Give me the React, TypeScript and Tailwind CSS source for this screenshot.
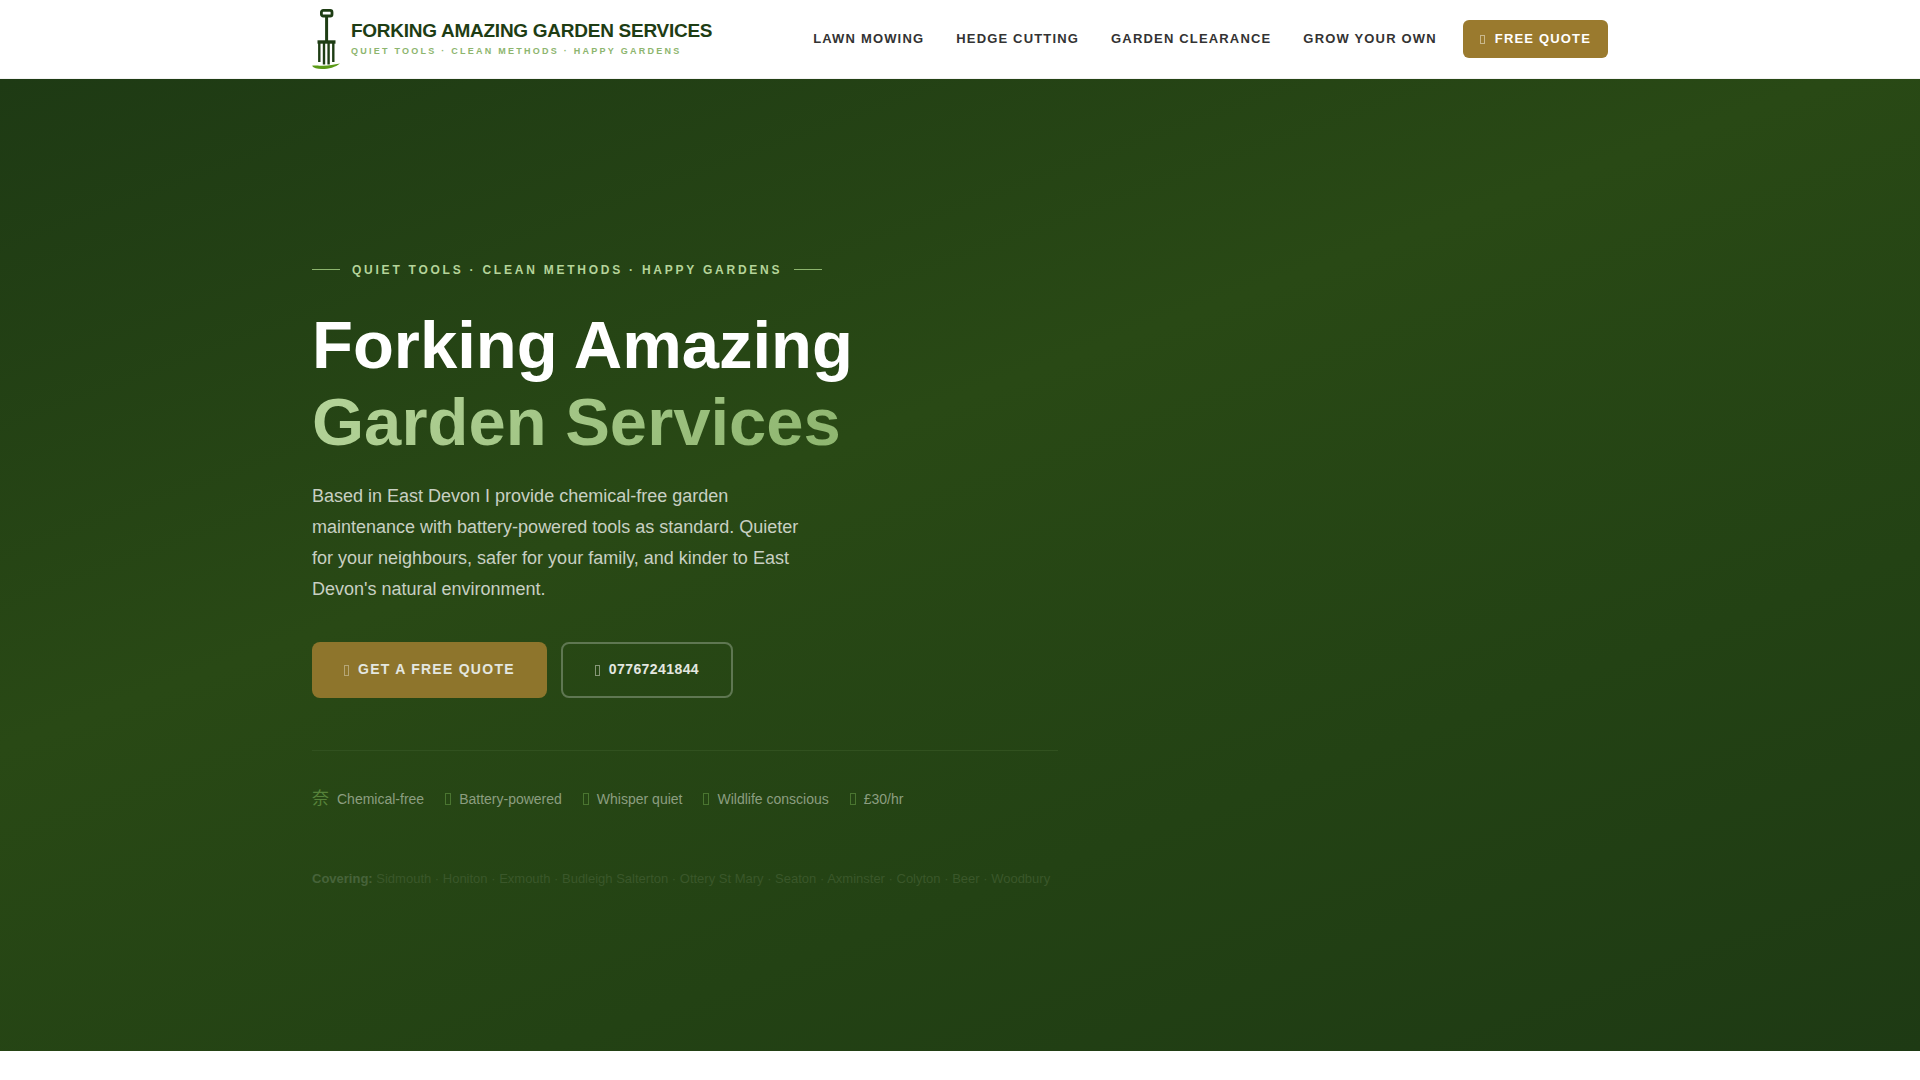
const navLinks = ["Lawn Mowing", "Hedge Cutting", "Garden Clearance", "Grow Your Own"];

const features = ["Battery-powered", "Whisper quiet", "Wildlife conscious", "£30/hr"];

const towns = [
  "Sidmouth", "Honiton", "Exmouth", "Budleigh Salterton", "Ottery St Mary",
  "Seaton", "Axminster", "Colyton", "Beer", "Woodbury",
];

function ForkLogo() {
  return (
    <svg viewBox="0 0 28 60" className="h-[60px] w-7 shrink-0" aria-hidden="true">
      <rect x="9.4" y="1.4" width="10.6" height="5.6" rx="1.8" fill="none" stroke="#1e3d14" strokeWidth="2.8" />
      <path d="M14.6 7v25" stroke="#1e3d14" strokeWidth="3" />
      <path d="M5.5 31.300h18v3.400h-18z" fill="#1e3d14" />
      <path d="M7.300 33v20M12 33v22.500M16.600 33v22.500M21.300 33v20" stroke="#1e3d14" strokeWidth="2.400" />
      <path d="M0 56.800c4-.500 6 .200 11 0 6-.300 11-1 17-2.300-4.500 3.700-11 5.500-18 5.500C5 60 1.500 59 0 56.800z" fill="#5a9a16" />
    </svg>
  );
}

function Header() {
  return (
    <header className="border-b border-[#f3f3f3] bg-white">
      <div className="mx-auto flex h-[78px] max-w-[1296px] items-center justify-between">
        <a href="#" className="flex items-center gap-[11px]">
          <ForkLogo />
          <span className="flex flex-col">
            <span className="text-[19px] leading-6 font-bold tracking-[-0.014em] text-[#1e3d14]">
              FORKING AMAZING GARDEN SERVICES
            </span>
            <span className="text-[9px] leading-4 font-bold tracking-[0.25em] text-[#8db56e]">
              QUIET TOOLS · CLEAN METHODS · HAPPY GARDENS
            </span>
          </span>
        </a>
        <nav className="flex items-center text-[13px] leading-5 font-bold tracking-[0.09em] text-[#333333] uppercase">
          {navLinks.map((l) => (
            <a key={l} href="#" className="px-4">{l}</a>
          ))}
          <a href="#" className="ml-[10px] flex items-center gap-[10px] rounded-md bg-[#9a7a2e] px-[17px] py-[9px] text-white">
            <span className="mt-px h-[9px] w-[5px] border border-[#c9b88c]" />
            Free Quote
          </a>
        </nav>
      </div>
    </header>
  );
}

export default function App() {
  return (
    <div className="min-h-screen bg-white font-['Liberation_Sans','Noto_Sans_CJK_SC',sans-serif]">
      <Header />
      <main className="flex min-h-[90vh] items-center bg-[linear-gradient(160deg,#1e3a14_0%,#294915_40%,#234214_70%,#1e3a14_100%)] pt-[18px]">
        <div className="mx-auto w-full max-w-[1296px]">
          <div className="max-w-[746px]">
            <p className="flex items-center gap-3 text-[12px] leading-5 font-bold tracking-[0.23em] text-[#b5d49a]">
              <span className="h-px w-7 bg-[#8db56e]" />
              QUIET TOOLS · CLEAN METHODS · HAPPY GARDENS
              <span className="h-px w-7 bg-[#8db56e]" />
            </p>
            <h1 className="mt-[26px] text-[67px] leading-[77px] font-bold text-white">
              Forking Amazing
              <br />
              <span className="bg-[linear-gradient(135deg,#b5d49a,#8db56e)] bg-clip-text text-transparent">
                Garden Services
              </span>
            </h1>
            <p className="mt-[21px] max-w-[510px] text-[18px] leading-[31px] text-[#c8d0c3]">
              Based in East Devon I provide chemical-free garden maintenance with battery-powered tools as
              standard. Quieter for your neighbours, safer for your family, and kinder to East Devon's natural
              environment.
            </p>
            <div className="mt-[37px] flex gap-[14px] text-[14px] font-bold text-[#e4e7e0]">
              <a href="#" className="flex h-14 items-center gap-[9px] rounded-lg bg-[#8e752c] px-8 tracking-[0.09em]">
                <span className="mt-[2px] h-[11px] w-[5px] border border-[#b5a677]" />
                GET A FREE QUOTE
              </a>
              <a href="#" className="flex h-14 items-center gap-[9px] rounded-lg border-2 border-[#5f7752] px-8 tracking-[0.03em]">
                <span className="mt-[2px] h-[11px] w-[5px] border border-[#869778]" />
                07767241844
              </a>
            </div>
            <ul className="mt-[52px] flex gap-[21px] border-t border-[#31511f] pt-9 text-[14px] leading-6 text-[#8c9e80]">
              <li className="flex items-center gap-2">
                <span className="text-[17px] text-[#56823a]">奈</span>
                Chemical-free
              </li>
              {features.map((f) => (
                <li key={f} className="flex items-center gap-2">
                  <span className="h-3 w-[6px] border border-[#4a7530]" />
                  {f}
                </li>
              ))}
            </ul>
            <p className="mt-[58px] text-[13px] leading-5 text-[#3a572a]">
              <strong className="text-[#46633a]">Covering:</strong> {towns.join(" · ")}
            </p>
          </div>
        </div>
      </main>
    </div>
  );
}
